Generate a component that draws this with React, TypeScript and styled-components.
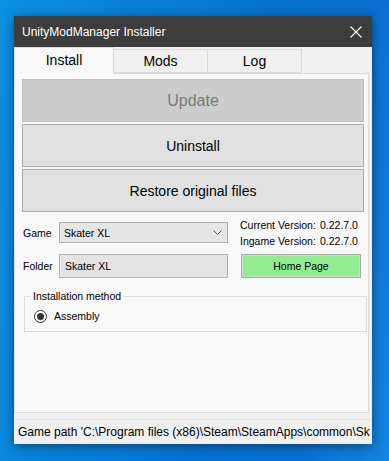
import React from 'react'
import styled, { createGlobalStyle } from 'styled-components'

const GlobalStyle = createGlobalStyle`
    html, body {
        margin: 0;
        padding: 0;
        height: 461px;
        overflow: hidden;
    }
    body {
        font-family: "Liberation Sans", Arial, sans-serif;
        background: linear-gradient(100deg, #0b90e2 0%, #087fd9 30%, #0672d2 60%, #0a6fd0 80%, #1484e0 100%);
    }
`

const Desktop = styled.div`
    padding: 16px 0 0 14px;
`

const Window = styled.div`
    width: 358px;
    height: 428px;
    display: flex;
    flex-direction: column;
    background: #f0f0f0;
    box-shadow: 0 2px 10px rgba(0, 0, 0, 0.45);
`

const TitleBar = styled.div`
    height: 31px;
    flex: none;
    display: flex;
    align-items: center;
    justify-content: space-between;
    padding: 0 8px 0 8px;
    background: #3d3d3d;
    color: #ffffff;
    font-size: 12px;
`

const CloseButton = styled.div`
    width: 14px;
    height: 14px;
    display: flex;
    align-items: center;
    justify-content: center;
    margin-right: 1px;
`

const TabControl = styled.div`
    display: flex;
    flex-direction: column;
    margin-right: 3px;
`

const TabStrip = styled.div`
    height: 26px;
    display: flex;
    align-items: flex-end;
    position: relative;
    z-index: 1;
`

const Tab = styled.div<{ $active?: boolean, $width: number }>`
    box-sizing: border-box;
    width: ${props => props.$width}px;
    height: ${props => props.$active ? 27 : 24}px;
    margin-bottom: ${props => props.$active ? -1 : 0}px;
    margin-left: -1px;
    display: flex;
    align-items: center;
    justify-content: center;
    padding-bottom: ${props => props.$active ? 3 : 0}px;
    border: 1px solid #dadada;
    border-bottom: ${props => props.$active ? 'none' : '1px solid #dadada'};
    background: ${props => props.$active ? '#f9f8f9' : '#f0f0f0'};
    font-size: 14px;
    color: #000000;
    &:first-child {
        margin-left: 0;
    }
`

const TabPage = styled.div`
    box-sizing: border-box;
    height: 340px;
    border: 1px solid #dadada;
    background: #f9f8f9;
    padding: 5px 4px 0 7px;
    display: flex;
    flex-direction: column;
`

const ButtonStack = styled.div`
    display: flex;
    flex-direction: column;
    gap: 2px;
`

const BigButton = styled.div<{ $disabled?: boolean }>`
    box-sizing: border-box;
    height: 43px;
    display: flex;
    align-items: center;
    justify-content: center;
    border: 1px solid ${props => props.$disabled ? '#bfbfbf' : '#adadad'};
    background: ${props => props.$disabled ? '#cccccc' : '#e1e1e1'};
    color: ${props => props.$disabled ? '#7a7a7a' : '#000000'};
    font-size: ${props => props.$disabled ? 16 : 14}px;
`

const FormGrid = styled.div`
    display: grid;
    grid-template-columns: 37px 169px 1fr;
    grid-template-rows: 21px 24px;
    row-gap: 11px;
    margin-top: 10px;
    font-size: 10.5px;
    color: #000000;
`

const FieldLabel = styled.div`
    display: flex;
    align-items: center;
    padding-left: 1px;
`

const ComboBox = styled.div`
    box-sizing: border-box;
    display: flex;
    align-items: center;
    justify-content: space-between;
    padding: 0 5px 0 4px;
    border: 1px solid #adadad;
    background: #e5e5e5;
`

const TextBox = styled.div`
    box-sizing: border-box;
    display: flex;
    align-items: center;
    padding-left: 5px;
    border: 1px solid #b4b4b4;
    background: #e3e3e3;
`

const VersionTable = styled.div`
    align-self: center;
    margin-left: 12px;
    display: grid;
    grid-template-columns: 80px auto;
    line-height: 16px;
`

const HomeButton = styled.div`
    box-sizing: border-box;
    width: 120px;
    margin-left: 13px;
    display: flex;
    align-items: center;
    justify-content: center;
    border: 1px solid #a9a9a9;
    box-shadow: inset 0 0 0 1px #c8dcc8;
    background: #90ee90;
`

const GroupBox = styled.fieldset`
    box-sizing: border-box;
    width: 343px;
    margin: 11px 0 0 2px;
    padding: 6px 9px 8px 9px;
    border: 1px solid #dcdcdc;
    font-size: 10.5px;
`

const GroupLegend = styled.legend`
    margin-left: -3px;
    padding: 0 2px;
    line-height: 14px;
`

const RadioRow = styled.label`
    display: flex;
    align-items: center;
    gap: 7px;
    height: 14px;
`

const RadioCircle = styled.span`
    box-sizing: border-box;
    width: 13px;
    height: 13px;
    border-radius: 50%;
    border: 1px solid #333333;
    background: #ffffff;
    display: flex;
    align-items: center;
    justify-content: center;
    &::after {
        content: '';
        width: 7px;
        height: 7px;
        border-radius: 50%;
        background: #333333;
    }
`

const StatusBar = styled.div`
    height: 25px;
    margin-top: 6px;
    display: flex;
    align-items: center;
    padding-left: 4px;
    padding-right: 2px;
    border-top: 1px solid #e4e4e4;
    font-size: 12px;
    color: #000000;
    white-space: nowrap;
    overflow: hidden;
`

const tabs = [
    { title: 'Install', width: 100, active: true },
    { title: 'Mods', width: 95 },
    { title: 'Log', width: 95 },
]

const versions = [
    { label: 'Current Version:', value: '0.22.7.0' },
    { label: 'Ingame Version:', value: '0.22.7.0' },
]

const App = () => {
    return (
        <>
            <GlobalStyle />
            <Desktop>
                <Window>
                    <TitleBar>
                        <span>UnityModManager Installer</span>
                        <CloseButton>
                            <svg width="12" height="12" viewBox="0 0 12 12">
                                <path d="M0.5 0.5 L11.5 11.5 M11.5 0.5 L0.5 11.5" stroke="#ffffff" strokeWidth="1.1" fill="none" />
                            </svg>
                        </CloseButton>
                    </TitleBar>
                    <TabControl>
                        <TabStrip>
                            {tabs.map(({ title, width, active }) => (
                                <Tab key={title} $width={width} $active={active}>{title}</Tab>
                            ))}
                        </TabStrip>
                        <TabPage>
                            <ButtonStack>
                                <BigButton $disabled>Update</BigButton>
                                <BigButton>Uninstall</BigButton>
                                <BigButton>Restore original files</BigButton>
                            </ButtonStack>
                            <FormGrid>
                                <FieldLabel>Game</FieldLabel>
                                <ComboBox>
                                    <span>Skater XL</span>
                                    <svg width="9" height="5" viewBox="0 0 9 5">
                                        <path d="M0.5 0.5 L4.5 4.5 L8.5 0.5" stroke="#555555" strokeWidth="1" fill="none" />
                                    </svg>
                                </ComboBox>
                                <VersionTable>
                                    {versions.map(({ label, value }) => (
                                        <React.Fragment key={label}>
                                            <span>{label}</span>
                                            <span>{value}</span>
                                        </React.Fragment>
                                    ))}
                                </VersionTable>
                                <FieldLabel>Folder</FieldLabel>
                                <TextBox>Skater XL</TextBox>
                                <HomeButton>Home Page</HomeButton>
                            </FormGrid>
                            <GroupBox>
                                <GroupLegend>Installation method</GroupLegend>
                                <RadioRow>
                                    <RadioCircle />
                                    <span>Assembly</span>
                                </RadioRow>
                            </GroupBox>
                        </TabPage>
                    </TabControl>
                    <StatusBar>Game path 'C:\Program files (x86)\Steam\SteamApps\common\Sk</StatusBar>
                </Window>
            </Desktop>
        </>
    )
}

export default App
